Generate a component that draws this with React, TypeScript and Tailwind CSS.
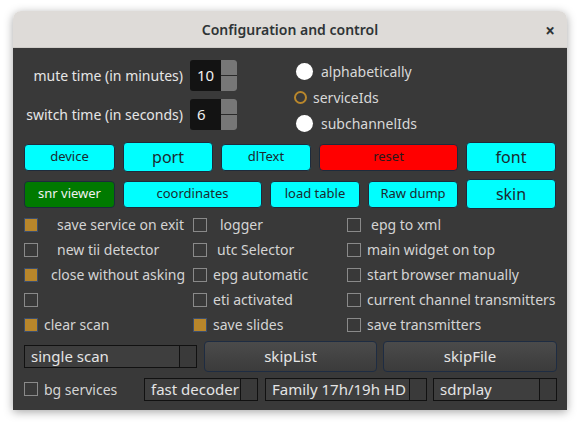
import React from 'react';

const font = { fontFamily: '"Noto Sans", "DejaVu Sans", sans-serif' };

const SpinBox = ({ value }: { value: string }) => (
  <div className="flex h-[31px] w-[47px] overflow-hidden rounded-[3px] bg-[#131313]">
    <div className="flex flex-1 items-center pl-[7px] text-[15px] text-[#f0f0f0]">{value}</div>
    <div className="flex w-[16px] flex-col bg-[#777777]">
      <div className="flex-1 border-b border-[#2a2a2a]" />
      <div className="flex-1" />
    </div>
  </div>
);

const Btn = ({ label, w, tone = 'cyan', big = false }: { label: string; w: string; tone?: 'cyan' | 'green' | 'red'; big?: boolean }) => {
  const toneCls =
    tone === 'green' ? 'bg-[#007a00] text-[#f2f2f2]' : tone === 'red' ? 'bg-[#ff0000] text-[#2a1a1a]' : 'bg-[#00ffff] text-[#1c2a30]';
  const size = big ? 'h-[30px] text-[16px]' : 'h-[27px] text-[13px]';
  return (
    <div className={`flex items-center justify-center rounded-[4px] border border-[#1d2b3c] ${toneCls} ${size} ${w}`}>{label}</div>
  );
};

const Check = ({ on = false }: { on?: boolean }) => (
  <div
    className={`h-[14px] w-[14px] shrink-0 border ${on ? 'border-[#3d4f6e] bg-[#b8862b]' : 'border-[#8a8a8a] bg-[#393939]'}`}
  />
);

const CheckItem = ({ label, on, gap, w }: { label: string; on?: boolean; gap: string; w: string }) => (
  <div className={`flex items-center ${w}`}>
    <Check on={on} />
    <span className={`${gap} whitespace-nowrap text-[14px] text-[#d4d4d4]`}>{label}</span>
  </div>
);

// combo box: the arrow part sits over the end of a long text
const Combo = ({ label, w }: { label: string; w: string }) => (
  <div className={`relative flex h-[23px] ${w} overflow-hidden border border-[#111] bg-[#3e3e3e]`}>
    <div className="flex-1 whitespace-nowrap pl-[6px] text-[15px] leading-[21px] text-[#e4e4e4]">{label}</div>
    <div className="absolute right-0 top-0 h-full w-[17px] border-l border-[#111] bg-[#3a3a3a]" />
  </div>
);

const BigBtn = ({ label, w }: { label: string; w: string }) => (
  <div
    className={`flex h-[31px] ${w} items-center justify-center rounded-[4px] border border-[#1e2c42] bg-gradient-to-b from-[#4b4b4b] to-[#3b3b3b] text-[15px] text-[#e6e6e6]`}
  >
    {label}
  </div>
);

export default function App() {
  const rows: [string, boolean, string][][] = [
    [
      ['save service on exit', true, 'ml-[19px]'],
      ['logger', false, 'ml-[13px]'],
      ['epg to xml', false, 'ml-[10px]'],
    ],
    [
      ['new tii detector', false, 'ml-[19px]'],
      ['utc Selector', false, 'ml-[10px]'],
      ['main widget on top', false, 'ml-[6px]'],
    ],
    [
      ['close without asking', true, 'ml-[13px]'],
      ['epg automatic', false, 'ml-[6px]'],
      ['start browser manually', false, 'ml-[6px]'],
    ],
    [
      ['', false, 'ml-[6px]'],
      ['eti activated', false, 'ml-[6px]'],
      ['current channel transmitters', false, 'ml-[6px]'],
    ],
    [
      ['clear scan', true, 'ml-[6px]'],
      ['save slides', true, 'ml-[6px]'],
      ['save transmitters', false, 'ml-[6px]'],
    ],
  ];

  return (
    <div className="h-[427px] w-[581px] bg-white pl-[13px] pt-[11px]" style={font}>
      <div className="flex h-[399px] w-[554px] flex-col overflow-hidden rounded-t-[8px] shadow-[0_2px_10px_rgba(0,0,0,0.35)]">
        {/* title bar */}
        <div className="relative flex h-[37px] shrink-0 items-center justify-center border-b border-[#cfccc8] bg-[#dedbd8]">
          <span className="text-[14px] font-semibold text-[#2e3436]">Configuration and control</span>
          <span className="absolute right-[12px] top-[7px] text-[17px] font-bold text-[#2e3436]">×</span>
        </div>

        <div className="flex flex-1 flex-col bg-[#393939] pl-[11px] pr-[10px]">
          {/* spin boxes + radios */}
          <div className="mt-[12px] flex">
            <div className="flex w-[213px] flex-col gap-[8px]">
              <div className="flex items-center justify-end gap-[7px]">
                <span className="text-[14px] text-[#e6e6e6]">mute time (in minutes)</span>
                <SpinBox value="10" />
              </div>
              <div className="flex items-center justify-end gap-[7px]">
                <span className="text-[14px] text-[#e6e6e6]">switch time (in seconds)</span>
                <SpinBox value="6" />
              </div>
            </div>
            <div className="ml-[57px] flex flex-col">
              <div className="flex h-[22px] items-center">
                <div className="ml-[2px] h-[17px] w-[17px] rounded-full bg-white" />
                <span className="ml-[8px] text-[14px] text-[#d8d8d8]">alphabetically</span>
              </div>
              <div className="mt-[4px] flex h-[22px] items-center">
                <div className="h-[13px] w-[13px] rounded-full border-2 border-[#b8862b]" />
                <span className="ml-[6px] text-[14px] text-[#d8d8d8]">serviceIds</span>
              </div>
              <div className="mt-[4px] flex h-[22px] items-center">
                <div className="ml-[2px] h-[17px] w-[17px] rounded-full bg-white" />
                <span className="ml-[8px] text-[14px] text-[#d8d8d8]">subchannelIds</span>
              </div>
            </div>
          </div>

          {/* button rows */}
          <div className="mt-[8px] flex h-[30px] items-center gap-[8px]">
            <Btn label="device" w="w-[91px]" />
            <Btn label="port" w="w-[90px]" big />
            <Btn label="dlText" w="w-[90px]" />
            <Btn label="reset" w="w-[139px]" tone="red" />
            <Btn label="font" w="w-[90px]" big />
          </div>
          <div className="mt-[7px] flex h-[30px] items-center gap-[8px]">
            <Btn label="snr viewer" w="w-[91px]" tone="green" />
            <Btn label="coordinates" w="w-[139px]" />
            <Btn label="load table" w="w-[90px]" />
            <Btn label="Raw dump" w="w-[90px]" />
            <Btn label="skin" w="w-[90px]" big />
          </div>

          {/* checkboxes */}
          <div className="mt-[3px] flex flex-col">
            {rows.map((r, i) => (
              <div key={i} className="flex h-[25px] items-center">
                <CheckItem label={r[0][0]} on={r[0][1]} gap={r[0][2]} w="w-[169px]" />
                <CheckItem label={r[1][0]} on={r[1][1]} gap={r[1][2]} w="w-[154px]" />
                <CheckItem label={r[2][0]} on={r[2][1]} gap={r[2][2]} w="w-[200px]" />
              </div>
            ))}
          </div>

          {/* bottom rows */}
          <div className="mt-[4px] flex h-[31px] items-center">
            <Combo label="single scan" w="w-[173px]" />
            <BigBtn label="skipList" w="ml-[7px] w-[173px]" />
            <BigBtn label="skipFile" w="ml-[6px] w-[174px]" />
          </div>
          <div className="mt-[6px] flex h-[22px] items-center">
            <div className="flex w-[120px] items-center">
              <Check />
              <span className="ml-[6px] text-[14px] text-[#d4d4d4]">bg services</span>
            </div>
            <Combo label="fast decoder" w="w-[114px]" />
            <Combo label="Family 17h/19h HD Audio" w="ml-[7px] w-[162px]" />
            <Combo label="sdrplay" w="ml-[6px] w-[124px]" />
          </div>
        </div>
      </div>
    </div>
  );
}
